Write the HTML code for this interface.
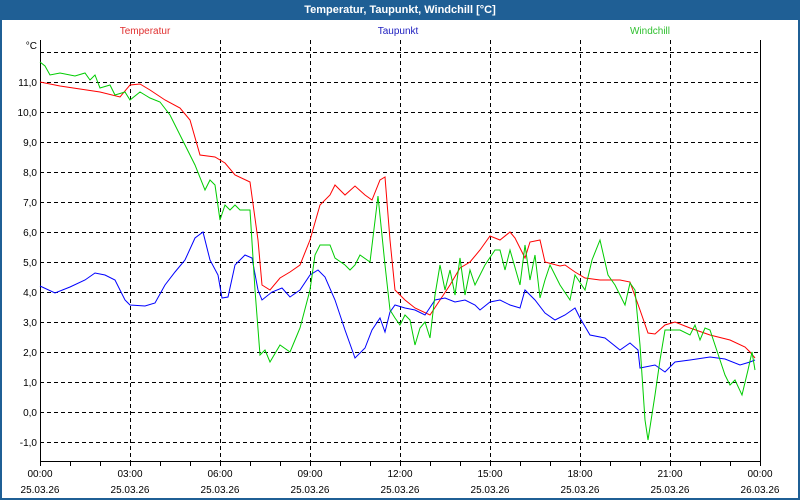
<!DOCTYPE html>
<html><head><meta charset="utf-8"><style>
html,body{margin:0;padding:0;width:800px;height:500px;overflow:hidden;background:#fff}
svg{display:block;font-family:"Liberation Sans",Tahoma,sans-serif;font-size:10px}
</style></head><body>
<svg width="800" height="500" xmlns="http://www.w3.org/2000/svg">
<rect x="0" y="0" width="800" height="500" fill="#1f5f95"/>
<rect x="2" y="20" width="796" height="478" fill="#fff"/>
<text x="400" y="13" fill="#fff" font-weight="bold" font-size="11" text-anchor="middle">Temperatur, Taupunkt, Windchill [°C]</text>
<text x="145" y="34" fill="#e03030" text-anchor="middle">Temperatur</text>
<text x="398" y="34" fill="#2020c0" text-anchor="middle">Taupunkt</text>
<text x="650" y="34" fill="#30c030" text-anchor="middle">Windchill</text>
<g stroke="#000" stroke-dasharray="4,3" stroke-width="1">
<path d="M40 52.5H760M40 82.5H760M40 112.5H760M40 142.5H760M40 172.5H760M40 202.5H760M40 232.5H760M40 262.5H760M40 292.5H760M40 322.5H760M40 352.5H760M40 382.5H760M40 412.5H760M40 442.5H760"/>
<path d="M130.5 40V461M220.5 40V461M310.5 40V461M400.5 40V461M490.5 40V461M580.5 40V461M670.5 40V461"/>
</g>
<g stroke="#000" stroke-width="1" fill="none">
<path d="M40.5 40V461.5H760.5V40"/>
<path d="M70.5 461V466M100.5 461V466M130.5 461V466M160.5 461V466M190.5 461V466M220.5 461V466M250.5 461V466M280.5 461V466M310.5 461V466M340.5 461V466M370.5 461V466M400.5 461V466M430.5 461V466M460.5 461V466M490.5 461V466M520.5 461V466M550.5 461V466M580.5 461V466M610.5 461V466M640.5 461V466M670.5 461V466M700.5 461V466M730.5 461V466M760.5 461V466M40.5 461V466"/>
</g>
<g text-anchor="end" fill="#000">
<text x="37" y="49">°C</text>
<text x="37" y="86">11,0</text><text x="37" y="116">10,0</text><text x="37" y="146">9,0</text><text x="37" y="176">8,0</text><text x="37" y="206">7,0</text><text x="37" y="236">6,0</text><text x="37" y="266">5,0</text><text x="37" y="296">4,0</text><text x="37" y="326">3,0</text><text x="37" y="356">2,0</text><text x="37" y="386">1,0</text><text x="37" y="416">0,0</text><text x="37" y="446">-1,0</text>
</g>
<g text-anchor="middle" fill="#000">
<text x="40" y="477">00:00</text><text x="40" y="493">25.03.26</text>
<text x="130" y="477">03:00</text><text x="130" y="493">25.03.26</text>
<text x="220" y="477">06:00</text><text x="220" y="493">25.03.26</text>
<text x="310" y="477">09:00</text><text x="310" y="493">25.03.26</text>
<text x="400" y="477">12:00</text><text x="400" y="493">25.03.26</text>
<text x="490" y="477">15:00</text><text x="490" y="493">25.03.26</text>
<text x="580" y="477">18:00</text><text x="580" y="493">25.03.26</text>
<text x="670" y="477">21:00</text><text x="670" y="493">25.03.26</text>
<text x="760" y="477">00:00</text><text x="760" y="493">26.03.26</text>
</g>
<g fill="none" stroke-width="1">
<polyline stroke="#ff0000" points="40,82 60,86 80,89 100,92 120,97 130,85 140,84 150,90 165,100 180,108 190,120 200,155 215,157 225,163 235,175 250,182 258,240 262,285 270,290 280,278 290,272 300,265 310,240 320,205 330,195 335,185 345,195 355,186 365,195 372,200 380,180 385,177 390,240 395,290 405,300 415,308 430,315 440,300 450,285 460,268 470,262 480,250 490,236 500,240 510,232 515,238 525,258 530,242 540,240 545,262 560,266 565,265 575,272 585,278 600,280 620,280 630,282 640,310 648,333 655,334 665,325 675,322 690,328 710,335 730,340 745,347 750,352 755,358"/>
<polyline stroke="#0000ff" points="40,286 55,293 70,287 85,280 95,273 105,275 115,280 125,300 130,305 145,306 155,303 165,285 175,272 185,260 195,238 203,232 210,260 218,275 222,298 228,297 235,265 245,255 252,258 258,290 262,300 272,292 282,288 290,297 300,290 310,275 318,270 325,277 335,300 345,330 355,358 365,348 372,330 380,318 385,332 390,312 395,305 405,308 415,310 425,315 435,300 445,298 455,302 465,300 475,305 480,310 490,302 500,300 510,305 520,308 525,290 535,300 545,313 555,320 565,315 575,308 580,318 590,335 605,338 620,350 630,343 638,350 640,368 655,365 665,372 675,362 690,360 710,357 725,359 740,365 750,362 755,360"/>
<polyline stroke="#00cc00" points="40,62 45,66 50,75 60,73 75,76 85,73 90,80 95,75 100,88 110,85 115,95 125,92 130,100 140,92 145,95 150,98 160,102 170,115 175,125 185,145 195,165 205,190 210,180 215,185 220,220 225,205 230,210 235,205 240,210 250,210 255,290 260,355 265,350 270,362 280,345 290,352 295,340 300,328 310,290 315,255 320,245 330,245 335,258 345,265 350,270 355,265 360,255 370,262 378,196 385,265 390,310 395,318 400,325 405,315 410,320 415,345 420,328 425,322 430,338 435,295 440,265 445,290 450,270 455,295 460,258 465,295 470,270 475,285 485,265 495,250 500,250 505,270 510,250 520,285 525,245 530,280 535,255 540,298 545,280 550,265 560,285 570,300 575,275 585,290 592,260 600,240 608,275 615,285 625,305 630,283 635,290 640,345 645,420 648,440 655,395 660,360 665,330 680,330 690,335 695,325 700,340 705,328 710,330 720,360 725,375 730,385 735,380 742,395 748,370 752,352 755,370"/>
</g>
</svg>
</body></html>
